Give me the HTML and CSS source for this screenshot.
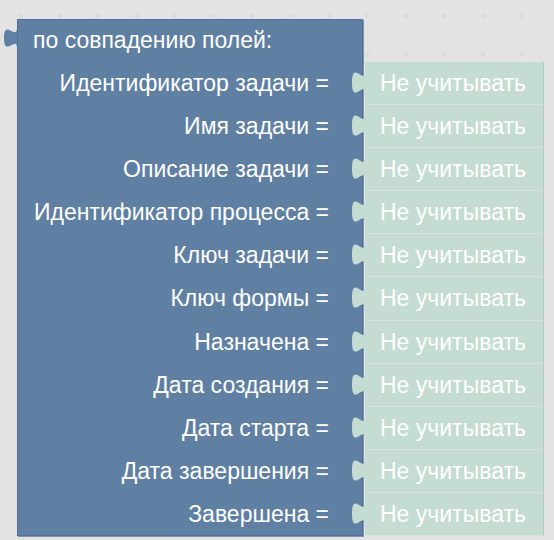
FILE: index.html
```html
<!DOCTYPE html>
<html lang="ru">
<head>
    <meta charset="UTF-8">
    <meta name="viewport" content="width=device-width, initial-scale=1.0">
    <title>Фильтр задач</title>
    <link rel="stylesheet" href="styles.css">
</head>
<body>
    <div class="workspace">
        <!-- dotted grid of the editor canvas -->
        <svg class="workspace-grid" width="554" height="540">
            <defs>
                <pattern id="grid-cross" x="-17.5" y="-22.5" width="38.5" height="38.5" patternUnits="userSpaceOnUse">
                    <path d="M36 38.5h5M38.5 36v5M-2.5 38.5h5M0 36v5M36 0h5M38.5 -2.5v5M-2.5 0h5M0 -2.5v5" stroke="#d3d3d3" stroke-width="1" fill="none"/>
                </pattern>
            </defs>
            <rect width="554" height="540" fill="url(#grid-cross)"/>
        </svg>

        <div class="block">
            <svg class="block-tab" width="13" height="20" viewBox="0 0 13 20">
                <path d="M13 0 C13 13 0 -10 0 10 S13 7 13 20 Z" fill="#5f7fa3"/>
            </svg>
            <div class="block-title">по совпадению полей:</div>

            <div class="field-row">
                <span class="field-label">Идентификатор задачи =</span>
                <div class="field-value">
                    <svg class="value-tab" width="13" height="23" viewBox="0 0 13 23"><path d="M13 0 C13 15 0 -12 0 11.5 S13 8 13 23 Z"/></svg>
                    Не учитывать
                </div>
            </div>
            <div class="field-row">
                <span class="field-label">Имя задачи =</span>
                <div class="field-value">
                    <svg class="value-tab" width="13" height="23" viewBox="0 0 13 23"><path d="M13 0 C13 15 0 -12 0 11.5 S13 8 13 23 Z"/></svg>
                    Не учитывать
                </div>
            </div>
            <div class="field-row">
                <span class="field-label">Описание задачи =</span>
                <div class="field-value">
                    <svg class="value-tab" width="13" height="23" viewBox="0 0 13 23"><path d="M13 0 C13 15 0 -12 0 11.5 S13 8 13 23 Z"/></svg>
                    Не учитывать
                </div>
            </div>
            <div class="field-row">
                <span class="field-label">Идентификатор процесса =</span>
                <div class="field-value">
                    <svg class="value-tab" width="13" height="23" viewBox="0 0 13 23"><path d="M13 0 C13 15 0 -12 0 11.5 S13 8 13 23 Z"/></svg>
                    Не учитывать
                </div>
            </div>
            <div class="field-row">
                <span class="field-label">Ключ задачи =</span>
                <div class="field-value">
                    <svg class="value-tab" width="13" height="23" viewBox="0 0 13 23"><path d="M13 0 C13 15 0 -12 0 11.5 S13 8 13 23 Z"/></svg>
                    Не учитывать
                </div>
            </div>
            <div class="field-row">
                <span class="field-label">Ключ формы =</span>
                <div class="field-value">
                    <svg class="value-tab" width="13" height="23" viewBox="0 0 13 23"><path d="M13 0 C13 15 0 -12 0 11.5 S13 8 13 23 Z"/></svg>
                    Не учитывать
                </div>
            </div>
            <div class="field-row">
                <span class="field-label">Назначена =</span>
                <div class="field-value">
                    <svg class="value-tab" width="13" height="23" viewBox="0 0 13 23"><path d="M13 0 C13 15 0 -12 0 11.5 S13 8 13 23 Z"/></svg>
                    Не учитывать
                </div>
            </div>
            <div class="field-row">
                <span class="field-label">Дата создания =</span>
                <div class="field-value">
                    <svg class="value-tab" width="13" height="23" viewBox="0 0 13 23"><path d="M13 0 C13 15 0 -12 0 11.5 S13 8 13 23 Z"/></svg>
                    Не учитывать
                </div>
            </div>
            <div class="field-row">
                <span class="field-label">Дата старта =</span>
                <div class="field-value">
                    <svg class="value-tab" width="13" height="23" viewBox="0 0 13 23"><path d="M13 0 C13 15 0 -12 0 11.5 S13 8 13 23 Z"/></svg>
                    Не учитывать
                </div>
            </div>
            <div class="field-row">
                <span class="field-label">Дата завершения =</span>
                <div class="field-value">
                    <svg class="value-tab" width="13" height="23" viewBox="0 0 13 23"><path d="M13 0 C13 15 0 -12 0 11.5 S13 8 13 23 Z"/></svg>
                    Не учитывать
                </div>
            </div>
            <div class="field-row">
                <span class="field-label">Завершена =</span>
                <div class="field-value">
                    <svg class="value-tab" width="13" height="23" viewBox="0 0 13 23"><path d="M13 0 C13 15 0 -12 0 11.5 S13 8 13 23 Z"/></svg>
                    Не учитывать
                </div>
            </div>
        </div>
    </div>
</body>
</html>
```

FILE: styles.css
```css
body {
    margin: 0;
    padding: 0;
    font-family: 'Liberation Sans', Arial, sans-serif;
}

.workspace {
    position: relative;
    width: 554px;
    height: 540px;
    overflow: hidden;
    background: #e3e3e3;
}

.workspace-grid {
    position: absolute;
    left: 0;
    top: 0;
}

/* the block sits at its own spot on the canvas */
.block {
    position: absolute;
    left: 17px;
    top: 19px;
    width: 346px;
    background: #5f7fa3;
    box-shadow: inset 0 0 0 1px #52709a, 1px 1px 0 #7f93aa;
    color: #fff;
    font-size: 23px;
}

.block-tab {
    position: absolute;
    left: -13px;
    top: 9px;
}

.block-title {
    height: 43px;
    line-height: 43px;
    padding-left: 16px;
    white-space: nowrap;
}

.field-row {
    display: flex;
    height: 43.1px;
}

.field-label {
    flex: none;
    width: 346px;
    box-sizing: border-box;
    padding-right: 34px;
    text-align: right;
    line-height: 43px;
    white-space: nowrap;
}

.field-value {
    position: relative;
    flex: none;
    width: 178px;
    margin-left: 2px;
    box-sizing: border-box;
    padding-left: 15px;
    line-height: 43px;
    white-space: nowrap;
    background: #c4dcd2;
    border-bottom: 1px solid #d3e6de;
    box-shadow: 1px 0 0 #b3cac0;
}

.value-tab {
    position: absolute;
    left: -13px;
    top: 9px;
    fill: #c4dcd2;
}
```
